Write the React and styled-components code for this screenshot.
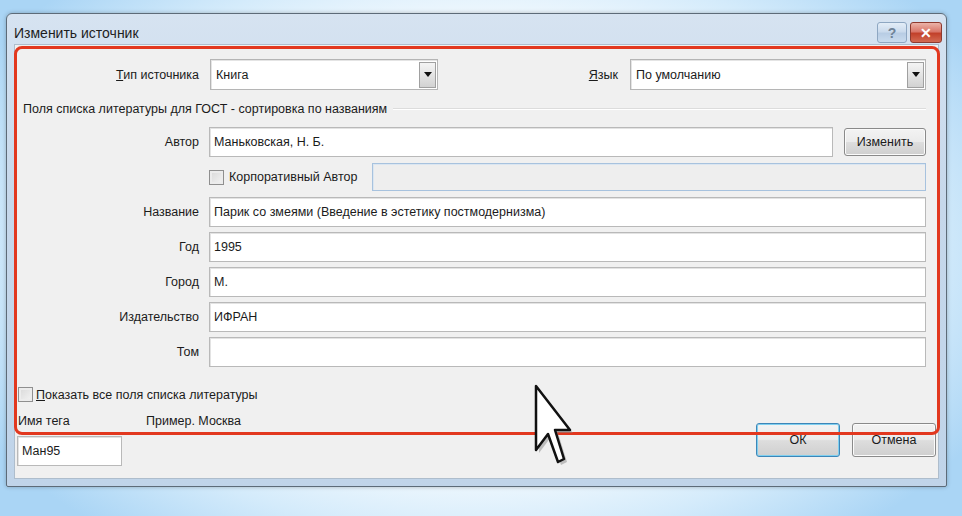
import React from 'react';
import styled, { createGlobalStyle } from 'styled-components';

const Global = createGlobalStyle`
  html, body {
    margin: 0;
    padding: 0;
  }
  body {
    font-family: "Liberation Sans", Arial, sans-serif;
  }
`;

const Page = styled.div`
  position: relative;
  width: 962px;
  height: 516px;
  box-sizing: border-box;
  padding: 13px 15px 0 6px;
  overflow: hidden;
  background: radial-gradient(ellipse 60% 72% at 50% 48%, #ffffff 52%, #d4ebfb 78%, #aad5f5 100%);
`;

const Window = styled.div`
  position: relative;
  width: 941px;
  height: 474px;
  box-sizing: border-box;
  border: 1px solid #5d6b78;
  border-radius: 6px 6px 2px 2px;
  background: linear-gradient(180deg, #d6e3f1 0%, #c6d8eb 40%, #c0d4e9 100%);
  display: flex;
  flex-direction: column;
  box-shadow: 0 0 4px rgba(0, 0, 0, 0.25);
`;

const TitleBar = styled.div`
  height: 31px;
  display: flex;
  align-items: flex-start;
  justify-content: space-between;
  padding: 0 4px 0 7px;
`;

const Title = styled.div`
  font-size: 14px;
  color: #1d1d1d;
  margin-top: 11px;
`;

const Caps = styled.div`
  display: flex;
  gap: 3px;
  margin-top: 8px;
`;

const CapButton = styled.div`
  width: ${p => p.w}px;
  height: 21px;
  box-sizing: border-box;
  border: 1px solid ${p => (p.close ? '#8d3a2f' : '#8ea7c2')};
  border-radius: 3px;
  background: ${p =>
    p.close
      ? 'linear-gradient(180deg, #ebb3a8 0%, #d9776a 45%, #c2412b 55%, #d36a52 100%)'
      : 'linear-gradient(180deg, #e3edf7 0%, #cbdbed 45%, #b8cde4 55%, #c9dbee 100%)'};
  display: flex;
  align-items: center;
  justify-content: center;
  color: ${p => (p.close ? '#ffffff' : '#6f8397')};
  font-size: 14px;
  font-weight: bold;
`;

const Panel = styled.div`
  flex: 1;
  margin: 0 7px 7px 7px;
  background: #f0f0f0;
  border: 1px solid #aebdcc;
  padding: 14px 12px 12px 0;
  display: flex;
  flex-direction: column;
  font-size: 12.5px;
  color: #1b1b1b;
`;

const TopRow = styled.div`
  display: flex;
  align-items: center;
  height: 31px;
`;

const Label = styled.div`
  width: ${p => (p.w ? `${p.w}px` : 'auto')};
  text-align: right;
  white-space: nowrap;
  padding-right: ${p => (p.gap ?? 10)}px;
  box-sizing: border-box;
  flex-shrink: 0;
`;

const SelectBox = styled.div`
  width: ${p => p.w}px;
  height: 31px;
  box-sizing: border-box;
  border: 1px solid #b5b5b5;
  box-shadow: inset 1px 1px 0 #e4e4e4;
  background: #ffffff;
  display: flex;
  align-items: center;
  justify-content: space-between;
  padding: 0 1px 0 5px;
`;

const Arrow = styled.div`
  width: 17px;
  height: 26px;
  box-sizing: border-box;
  border: 1px solid #a0a0a0;
  background: linear-gradient(180deg, #f4f4f4 0%, #e4e4e4 50%, #d2d2d2 100%);
  display: flex;
  align-items: center;
  justify-content: center;

  &::after {
    content: '';
    border-left: 4px solid transparent;
    border-right: 4px solid transparent;
    border-top: 5px solid #111;
  }
`;

const Spacer = styled.div`
  flex: 1;
`;

const Section = styled.div`
  display: flex;
  align-items: center;
  gap: 6px;
  margin: 11px 0 10px 8px;
  height: 16px;
  white-space: nowrap;
`;

const Rule = styled.div`
  flex: 1;
  height: 0;
  border-top: 1px solid #dcdcdc;
  border-bottom: 1px solid #ffffff;
`;

const Fields = styled.div`
  display: grid;
  grid-template-columns: 184px 1fr;
  column-gap: 10px;
  row-gap: 5px;
  grid-auto-rows: 30px;
  align-items: center;
`;

const FieldLabel = styled.div`
  text-align: right;
  white-space: nowrap;
`;

const Input = styled.div`
  height: ${p => p.h || 30}px;
  box-sizing: border-box;
  border: 1px solid ${p => (p.disabled ? '#a7c2de' : '#b9b9b9')};
  box-shadow: inset 1px 1px 0 ${p => (p.disabled ? '#dbe6f1' : '#e3e3e3')};
  background: ${p => (p.disabled ? '#eeeeee' : '#ffffff')};
  display: flex;
  align-items: center;
  padding-left: 4px;
  white-space: nowrap;
  overflow: hidden;
  flex: ${p => (p.grow ? 1 : 'none')};
  width: ${p => (p.w ? `${p.w}px` : 'auto')};
`;

const Cell = styled.div`
  display: flex;
  align-items: center;
  height: 30px;
  gap: ${p => p.gap || 0}px;
`;

const Button = styled.div`
  width: ${p => p.w}px;
  height: ${p => p.h}px;
  box-sizing: border-box;
  border: 1px solid ${p => (p.primary ? '#3d86b8' : '#8a8a8a')};
  border-radius: 3px;
  box-shadow: ${p => (p.primary ? 'inset 0 0 0 1px #7fcfef' : 'inset 0 0 0 1px #fbfbfb')};
  background: linear-gradient(180deg, #f3f3f3 0%, #ebebeb 48%, #dddddd 52%, #cfcfcf 100%);
  display: flex;
  align-items: center;
  justify-content: center;
  flex-shrink: 0;
`;

const Check = styled.div`
  width: 15px;
  height: 15px;
  box-sizing: border-box;
  border: 1px solid #8f8f8f;
  background: linear-gradient(135deg, #d8d8d8 0%, #f4f4f4 100%);
  box-shadow: inset 0 0 0 2px #ececec;
  flex-shrink: 0;
`;

const CheckRow = styled.div`
  display: flex;
  align-items: center;
  gap: ${p => p.gap || 4}px;
  white-space: nowrap;
`;

const Footer = styled.div`
  display: flex;
  justify-content: space-between;
  margin-top: 20px;
  padding-left: 3px;
`;

const FooterLeft = styled.div`
  display: flex;
  flex-direction: column;
`;

const TagLabels = styled.div`
  display: flex;
  margin-top: 12px;
  height: 14px;
  align-items: center;

  & > span:first-child {
    width: 128px;
  }
`;

const TagInput = styled(Input)`
  margin-top: 8px;
  margin-left: -1px;
`;

const Buttons = styled.div`
  display: flex;
  gap: 12px;
  margin-top: 36px;
  margin-right: -10px;
`;

const Highlight = styled.div`
  position: absolute;
  left: 7px;
  top: 32px;
  width: 926px;
  height: 389px;
  box-sizing: border-box;
  border: 3px solid #e2381f;
  border-radius: 8px;
  pointer-events: none;
`;

const Cursor = styled.svg`
  position: absolute;
  left: 531px;
  top: 381px;
`;

const fields = [
  ['Название', 'Парик со змеями (Введение в эстетику постмодернизма)'],
  ['Год', '1995'],
  ['Город', 'М.'],
  ['Издательство', 'ИФРАН'],
  ['Том', ''],
];

export default function App() {
  return (
    <Page>
      <Global />
      <Window>
        <TitleBar>
          <Title>Изменить источник</Title>
          <Caps>
            <CapButton w={30}>?</CapButton>
            <CapButton w={32} close>✕</CapButton>
          </Caps>
        </TitleBar>
        <Panel>
          <TopRow>
            <Label w={195} gap={11}><u>Т</u>ип источника</Label>
            <SelectBox w={228}>
              <span>Книга</span>
              <Arrow />
            </SelectBox>
            <Spacer />
            <Label gap={12}><u>Я</u>зык</Label>
            <SelectBox w={296}>
              <span>По умолчанию</span>
              <Arrow />
            </SelectBox>
          </TopRow>
          <Section>
            Поля списка литературы для ГОСТ - сортировка по названиям
            <Rule />
          </Section>
          <Fields>
            <FieldLabel>Автор</FieldLabel>
            <Cell gap={11}>
              <Input grow h={30}>Маньковская, Н. Б.</Input>
              <Button w={82} h={28}>Изменить</Button>
            </Cell>
            <span />
            <Cell>
              <CheckRow gap={5}>
                <Check />
                <span>Корпоративный Автор</span>
              </CheckRow>
              <Spacer />
              <Input disabled w={554} h={28} />
            </Cell>
            {fields.map(([label, value]) => (
              <React.Fragment key={label}>
                <FieldLabel>{label}</FieldLabel>
                <Input>{value}</Input>
              </React.Fragment>
            ))}
          </Fields>
          <Footer>
            <FooterLeft>
              <CheckRow gap={3}>
                <Check />
                <span><u>П</u>оказать все поля списка литературы</span>
              </CheckRow>
              <TagLabels>
                <span>Имя тега</span>
                <span>Пример. Москва</span>
              </TagLabels>
              <TagInput w={105} h={30}>Ман95</TagInput>
            </FooterLeft>
            <Buttons>
              <Button w={84} h={34} primary>ОК</Button>
              <Button w={84} h={34}>Отмена</Button>
            </Buttons>
          </Footer>
        </Panel>
        <Highlight />
      </Window>
      <Cursor width="44" height="90" viewBox="0 0 44 90">
        <path
          d="M5 5 L5 69 L17 53 L27 81 L33 78 L24 49 L39 49 Z"
          fill="#8a8a8a"
          opacity="0.5"
          transform="translate(3 3)"
        />
        <path
          d="M5 5 L5 69 L17 53 L27 81 L33 78 L24 49 L39 49 Z"
          fill="#ffffff"
          stroke="#111111"
          strokeWidth="2.5"
          strokeLinejoin="round"
        />
      </Cursor>
    </Page>
  );
}
